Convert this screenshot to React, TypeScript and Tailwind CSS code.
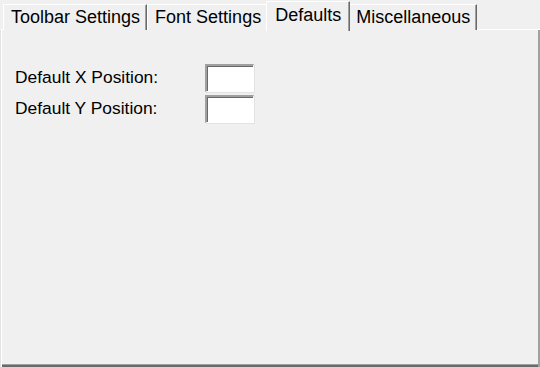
import React from "react";

const tabs = ["Toolbar Settings", "Font Settings", "Defaults", "Miscellaneous"];

function Tab({ label, selected }: { label: string; selected: boolean }) {
  if (selected) {
    return (
      <div className="relative z-10 -mx-[2px] -mb-[1px] flex h-[30px] items-center border-l border-r border-t border-l-white border-r-[#696969] border-t-white bg-[#f0f0f0] pl-[8px] pr-[8px] shadow-[inset_-1px_0_0_#a0a0a0]">
        <span className="-mt-[3px]">{label}</span>
      </div>
    );
  }
  return (
    <div className="flex h-[26px] items-center border-l border-r border-t border-l-white border-r-[#696969] border-t-white bg-[#f0f0f0] pl-[7px] pr-[6px] shadow-[inset_-1px_0_0_#a0a0a0]">
      <span>{label}</span>
    </div>
  );
}

function Field({ label }: { label: string }) {
  return (
    <div className="flex h-[28px] items-center">
      <div className="w-[190px] -mt-[2px]">{label}</div>
      <div className="h-[28px] w-[49px] border-l-2 border-t-2 border-l-[#a0a0a0] border-t-[#a0a0a0] border-b border-r border-b-white border-r-white bg-white shadow-[inset_1px_1px_0_#696969,1px_1px_0_#e3e3e3]" />
    </div>
  );
}

export default function App() {
  return (
    <div
      className="h-[367px] w-[540px] overflow-hidden bg-[#f0f0f0] text-[17.4px] text-black"
      style={{ fontFamily: '"Liberation Sans", Arial, sans-serif' }}
    >
      <div className="flex h-[30px] items-end pl-[3px] text-[18px]">
        {tabs.map((t) => (
          <Tab key={t} label={t} selected={t === "Defaults"} />
        ))}
      </div>
      <div className="-mt-[1px] h-[338px] border-l border-t border-l-[#e3e3e3] border-t-white shadow-[inset_1px_0_0_#ffffff,inset_-1px_0_0_#a0a0a0,inset_-2px_0_0_#a0a0a0,inset_0_-2px_0_#696969,inset_0_-3px_0_#a0a0a0]">
        <div className="flex flex-col gap-[3px] pl-[14px] pt-[34px]">
          <Field label="Default X Position:" />
          <Field label="Default Y Position:" />
        </div>
      </div>
    </div>
  );
}
